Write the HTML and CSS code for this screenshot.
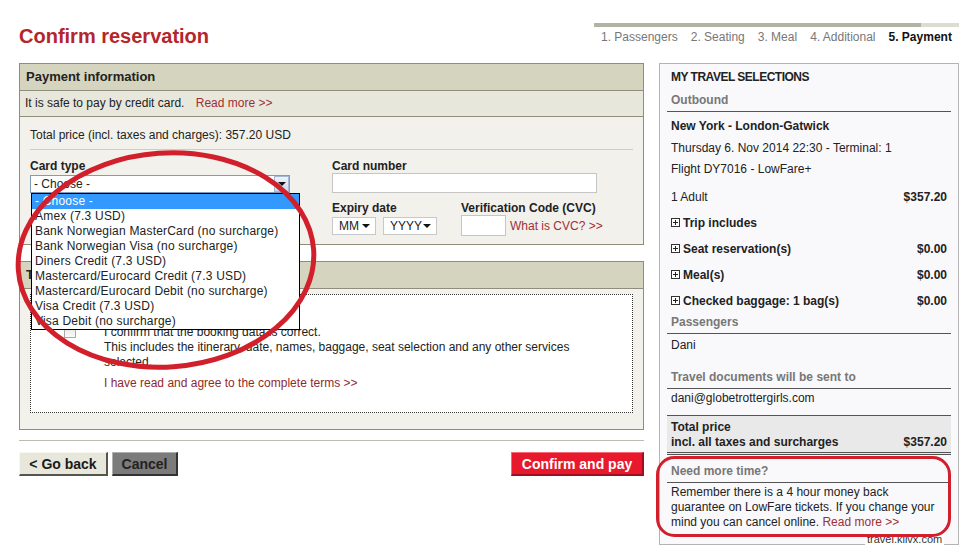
FILE: index.html
```html
<!DOCTYPE html>
<html lang="en">
<head>
    <meta charset="UTF-8">
    <title>Confirm reservation</title>
    <link rel="stylesheet" href="styles.css">
</head>
<body>

<div class="page">
    <div class="top">
        <h1>Confirm reservation</h1>
        <div class="steps">
            <div class="steps-bar"><div class="steps-done"></div></div>
            <div class="steps-list">
                <span>1. Passengers</span>
                <span>2. Seating</span>
                <span>3. Meal</span>
                <span>4. Additional</span>
                <span class="current">5. Payment</span>
            </div>
        </div>
    </div>

    <div class="content">
        <div class="main">
            <div class="panel">
                <div class="panel-head">Payment information</div>
                <div class="panel-note">It is safe to pay by credit card. <a class="link" href="#">Read more &gt;&gt;</a></div>
                <div class="panel-body payment">
                    <div class="total-line">Total price (incl. taxes and charges): 357.20 USD</div>
                    <div class="card-form">
                        <div class="field">
                            <label>Card type</label>
                            <div class="fake-select">
                                <span class="value">- Choose -</span>
                                <span class="arrow-box"><span class="tri"></span></span>
                                <ul class="options">
                                    <li class="selected">- Choose -</li>
                                    <li>Amex (7.3 USD)</li>
                                    <li>Bank Norwegian MasterCard (no surcharge)</li>
                                    <li>Bank Norwegian Visa (no surcharge)</li>
                                    <li>Diners Credit (7.3 USD)</li>
                                    <li>Mastercard/Eurocard Credit (7.3 USD)</li>
                                    <li>Mastercard/Eurocard Debit (no surcharge)</li>
                                    <li>Visa Credit (7.3 USD)</li>
                                    <li>Visa Debit (no surcharge)</li>
                                </ul>
                            </div>
                        </div>
                        <div class="field">
                            <label>Card number</label>
                            <div class="text-input card-number"></div>
                            <div class="expiry-row">
                                <div class="expiry">
                                    <label>Expiry date</label>
                                    <div class="mini-selects">
                                        <div class="mini-select mm">MM <span class="tri"></span></div>
                                        <div class="mini-select yyyy">YYYY <span class="tri"></span></div>
                                    </div>
                                </div>
                                <div class="cvc">
                                    <label>Verification Code (CVC)</label>
                                    <div class="cvc-row">
                                        <div class="text-input cvc-input"></div>
                                        <a class="link" href="#">What is CVC? &gt;&gt;</a>
                                    </div>
                                </div>
                            </div>
                        </div>
                    </div>
                </div>
            </div>

            <div class="panel terms-panel">
                <div class="panel-head">Terms and conditions</div>
                <div class="panel-body terms">
                    <div class="confirm-box">
                        <span class="checkbox"></span>
                        <div class="confirm-text">
                            <p>I confirm that the booking data is correct.</p>
                            <p>This includes the itinerary, date, names, baggage, seat selection and any other services selected.</p>
                            <a class="link terms-link" href="#">I have read and agree to the complete terms &gt;&gt;</a>
                        </div>
                    </div>
                </div>
            </div>

            <div class="divider"></div>

            <div class="actions">
                <button class="btn btn-back">&lt; Go back</button>
                <button class="btn btn-cancel">Cancel</button>
                <button class="btn btn-pay">Confirm and pay</button>
            </div>
        </div>

        <div class="sidebar">
            <div class="side-title">MY TRAVEL SELECTIONS</div>
            <div class="side-head first">Outbound</div>
            <div class="flight">
                <div class="flight-line strong">New York - London-Gatwick</div>
                <div class="flight-line">Thursday 6. Nov 2014 22:30 - Terminal: 1</div>
                <div class="flight-line">Flight DY7016 - LowFare+</div>
            </div>
            <div class="items">
                <div class="row"><span>1 Adult</span><b>$357.20</b></div>
                <div class="row strong"><span class="plus-label"><svg class="plus" width="9" height="9" viewBox="0 0 9 9"><rect x="0.5" y="0.5" width="8" height="8" fill="#fff" stroke="#333"/><path d="M2 4.5h5M4.5 2v5" stroke="#222"/></svg>Trip includes</span></div>
                <div class="row strong"><span class="plus-label"><svg class="plus" width="9" height="9" viewBox="0 0 9 9"><rect x="0.5" y="0.5" width="8" height="8" fill="#fff" stroke="#333"/><path d="M2 4.5h5M4.5 2v5" stroke="#222"/></svg>Seat reservation(s)</span><span>$0.00</span></div>
                <div class="row strong"><span class="plus-label"><svg class="plus" width="9" height="9" viewBox="0 0 9 9"><rect x="0.5" y="0.5" width="8" height="8" fill="#fff" stroke="#333"/><path d="M2 4.5h5M4.5 2v5" stroke="#222"/></svg>Meal(s)</span><span>$0.00</span></div>
                <div class="row strong"><span class="plus-label"><svg class="plus" width="9" height="9" viewBox="0 0 9 9"><rect x="0.5" y="0.5" width="8" height="8" fill="#fff" stroke="#333"/><path d="M2 4.5h5M4.5 2v5" stroke="#222"/></svg>Checked baggage: 1 bag(s)</span><span>$0.00</span></div>
            </div>
            <div class="side-head">Passengers</div>
            <div class="side-value">Dani</div>
            <div class="side-head docs">Travel documents will be sent to</div>
            <div class="side-value email">dani@globetrottergirls.com</div>
            <div class="total-box">
                <div>Total price</div>
                <div class="row-flat"><span>incl. all taxes and surcharges</span><span>$357.20</span></div>
            </div>
            <div class="side-head more">Need more time?</div>
            <div class="side-note">Remember there is a 4 hour money back guarantee on LowFare tickets. If you change your mind you can cancel online. <a class="link" href="#">Read more &gt;&gt;</a></div>
        </div>
    </div>
</div>

<div class="watermark">travel.klivx.com</div>

<svg class="marks" width="979" height="547" viewBox="0 0 979 547">
    <ellipse cx="166" cy="260" rx="148" ry="107" transform="rotate(-4 166 260)" fill="none" stroke="#d11f2b" stroke-width="5"/>
    <rect x="657.5" y="457.5" width="292" height="78" rx="17" fill="none" stroke="#d11f2b" stroke-width="3"/>
</svg>

</body>
</html>
```

FILE: styles.css
```css
body {
    margin: 0;
    font-family: "Liberation Sans", Arial, sans-serif;
    font-size: 12px;
    color: #222;
    background: #fff;
}

.page {
    width: 940px;
    padding: 0 20px 0 19px;
}

.top {
    display: flex;
    justify-content: space-between;
    height: 63px;
}

h1 {
    margin: 24px 0 0;
    font-size: 20px;
    line-height: 24px;
    color: #b4262b;
}

.steps {
    width: 365px;
    margin-top: 23px;
}

.steps-bar {
    height: 4px;
    background: #dcdcd0;
}

.steps-done {
    width: 327px;
    height: 4px;
    background: #b3b3a3;
}

.steps-list {
    display: flex;
    gap: 13px;
    margin-top: 3px;
    padding-left: 7px;
    line-height: 14px;
    color: #777;
}

.steps-list .current {
    font-weight: bold;
    color: #111;
}

.content {
    display: flex;
    gap: 15px;
    align-items: flex-start;
}

.main {
    width: 625px;
}

.link {
    color: #9e2f36;
    text-decoration: none;
}

/* panels */
.panel {
    border: 1px solid #8f8e7c;
}

.panel-head {
    height: 26px;
    line-height: 26px;
    padding-left: 6px;
    background: #d5d4be;
    border-bottom: 1px solid #8f8e7c;
    font-size: 13px;
    font-weight: bold;
}

.panel-note {
    height: 25px;
    line-height: 25px;
    padding-left: 5px;
    background: #e8e7dc;
    border-bottom: 1px solid #8f8e7c;
}

.panel-note .link {
    margin-left: 8px;
}

.panel-body {
    background: #f2f1ec;
    box-sizing: border-box;
}

.payment {
    height: 127px;
    padding: 11px 10px 0;
}

.total-line {
    line-height: 15px;
    padding-bottom: 6px;
    border-bottom: 1px solid #cfcdc0;
}

.card-form {
    display: grid;
    grid-template-columns: 260px 1fr;
    column-gap: 42px;
    margin-top: 9px;
}

label {
    display: block;
    font-weight: bold;
    line-height: 14px;
}

.fake-select {
    position: relative;
    display: flex;
    height: 18px;
    margin-top: 2px;
    border: 1px solid #7f9db9;
    background: #fff;
    box-sizing: border-box;
}

.fake-select .value {
    flex: 1;
    padding-left: 3px;
    line-height: 16px;
}

.arrow-box {
    display: flex;
    align-items: center;
    justify-content: center;
    width: 15px;
    border: 1px solid #a5b7d6;
    background: linear-gradient(#eef3fc, #c9d8f0);
    box-sizing: border-box;
}

.tri {
    width: 0;
    height: 0;
    border-left: 4px solid transparent;
    border-right: 4px solid transparent;
    border-top: 4px solid #111;
}

.options {
    position: absolute;
    top: 17px;
    left: 0;
    z-index: 5;
    width: 269px;
    margin: 0;
    padding: 0;
    list-style: none;
    border: 1px solid #000;
    background: #fff;
    box-sizing: border-box;
}

.options li {
    line-height: 15px;
    padding-left: 3px;
    letter-spacing: 0.2px;
    white-space: nowrap;
}

.options .selected {
    background: #3399ff;
    color: #fff;
}

.text-input {
    border: 1px solid #c5c5c5;
    background: #fff;
    box-sizing: border-box;
}

.card-number {
    width: 265px;
    height: 20px;
}

.expiry-row {
    display: flex;
    margin-top: 8px;
}

.expiry {
    width: 105px;
    margin-right: 24px;
}

.mini-selects {
    display: flex;
    gap: 7px;
    margin-top: 2px;
}

.mini-select {
    display: flex;
    align-items: center;
    justify-content: space-between;
    height: 18px;
    padding: 0 5px 0 6px;
    border: 1px solid #c8c8c8;
    background: #fff;
    box-sizing: border-box;
}

.mm {
    width: 44px;
}

.yyyy {
    width: 54px;
}

.cvc-row {
    display: flex;
    align-items: center;
}

.cvc-input {
    width: 45px;
    height: 21px;
    margin-right: 4px;
}

.terms-panel {
    margin-top: 16px;
}

.terms {
    height: 140px;
    padding: 5px 10px 0;
}

.confirm-box {
    display: flex;
    align-items: flex-start;
    height: 119px;
    padding-top: 30px;
    border: 1px dotted #333;
    background: #fff;
    box-sizing: border-box;
}

.checkbox {
    width: 12px;
    height: 12px;
    margin: 1px 0 0 33px;
    border: 1px solid #a8a8a8;
    background: linear-gradient(#e6e6e6, #fafafa);
    box-sizing: border-box;
}

.confirm-text {
    width: 482px;
    margin-left: 28px;
}

.confirm-text p {
    margin: 0;
    line-height: 15px;
}

.terms-link {
    display: block;
    margin-top: 6px;
    line-height: 15px;
    color: #8e2a2e;
}

.divider {
    margin-top: 10px;
    border-top: 1px solid #bcbcb0;
}

.actions {
    display: flex;
    margin-top: 11px;
}

.btn {
    height: 24px;
    padding: 0;
    font-family: "Liberation Sans", Arial, sans-serif;
    font-size: 14px;
    font-weight: bold;
    border-style: solid;
    border-width: 1px 2px 2px 1px;
    box-sizing: border-box;
    cursor: pointer;
}

.btn-back {
    width: 89px;
    background: #e8e7dc;
    color: #1a1a1a;
    border-color: #f7f7f0 #55554c #55554c #f7f7f0;
}

.btn-cancel {
    width: 66px;
    margin-left: 4px;
    background: #7b7b7b;
    color: #222;
    border-color: #b0b0b0 #333 #333 #b0b0b0;
}

.btn-pay {
    width: 133px;
    margin-left: auto;
    background: #e8192c;
    color: #fff;
    border-color: #f36a76 #9c1020 #9c1020 #f36a76;
}

/* sidebar */
.sidebar {
    width: 300px;
    padding: 5px 7px 14px;
    border: 1px solid #b4b4b4;
    background: #f9f9fc;
    box-sizing: border-box;
}

.side-title {
    padding: 0 4px;
    line-height: 16px;
    font-weight: bold;
    letter-spacing: -0.5px;
}

.side-head {
    padding: 0 4px 3px;
    line-height: 16px;
    font-weight: bold;
    color: #777;
    border-bottom: 1px solid #555;
}

.side-head.first {
    margin-top: 7px;
}

.flight {
    padding: 4px 4px 0;
}

.flight-line {
    line-height: 21.5px;
}

.strong {
    font-weight: bold;
}

.items {
    margin-top: 3px;
}

.row {
    display: flex;
    justify-content: space-between;
    align-items: center;
    height: 26px;
    padding: 0 4px;
}

.plus-label {
    display: flex;
    align-items: center;
}

.plus {
    margin-right: 3px;
}

.side-value {
    margin-top: 3px;
    padding: 0 4px;
    line-height: 16px;
}

.side-head.docs {
    margin-top: 16px;
}

.side-value.email {
    margin-top: 1px;
}

.total-box {
    margin-top: 9px;
    padding: 4px 4px 2px;
    line-height: 15px;
    font-weight: bold;
    background: #e9e9e9;
    border-top: 1px solid #555;
    border-bottom: 3px double #555;
}

.row-flat {
    display: flex;
    justify-content: space-between;
}

.side-head.more {
    margin-top: 8px;
}

.side-note {
    margin-top: 2px;
    padding: 0 12px 0 4px;
    line-height: 15px;
}

.watermark {
    position: absolute;
    left: 865px;
    top: 533px;
    padding: 0 2px;
    font-size: 11px;
    line-height: 13px;
    color: #333;
    background: #fff;
}

.marks {
    position: absolute;
    top: 0;
    left: 0;
    z-index: 10;
    pointer-events: none;
}
```
